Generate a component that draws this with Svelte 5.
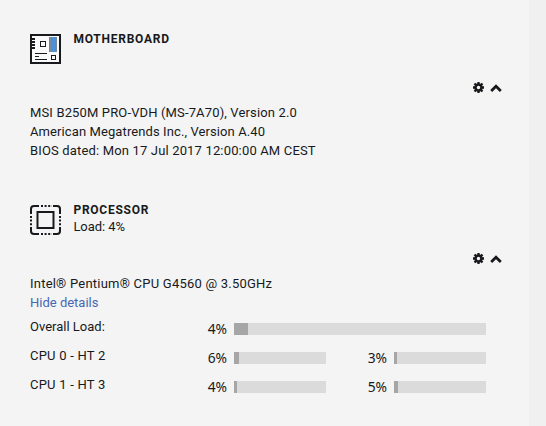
<script>
  const board = [
    ['MSI B250M PRO-VDH (MS-7A70), Version 2.0', 0.14],
    ['American Megatrends Inc., Version A.40', 0.1],
    ['BIOS dated: Mon 17 Jul 2017 12:00:00 AM CEST', 0.16]
  ];
  const threads = [
    { name: 'CPU 0 - HT 2', loads: [[6, 5], [3, 3]] },
    { name: 'CPU 1 - HT 3', loads: [[4, 3], [5, 4]] }
  ];
</script>

{#snippet tools()}
  <div class="tools">
    <svg width="11" height="11" viewBox="0 0 11 11">
      <path d="M5.5 0V11M0 5.5H11M1.5 1.5L9.5 9.5M9.5 1.5L1.5 9.5" stroke="#17191c" stroke-width="2.3" />
      <circle cx="5.5" cy="5.5" r="3" fill="#f4f4f4" stroke="#17191c" stroke-width="2.6" />
    </svg>
    <svg width="12" height="11" viewBox="0 0 12 11">
      <path d="M1.2 9L6 4.3L10.8 9" fill="none" stroke="#17191c" stroke-width="2.8" />
    </svg>
  </div>
{/snippet}

<main>
  <section class="motherboard">
    <header>
      <svg width="32" height="32" viewBox="0 0 32 32" shape-rendering="crispEdges">
        <rect x="1" y="2" width="29" height="28" fill="#f9f9f9" stroke="#17191c" stroke-width="2" />
        <path d="M5 20.5H17M5 26.5H17M5 23.5H9" stroke="#17191c" />
        <path d="M2 5.5H5M2 8.5H5M2 11.5H5M2 14.5H5" stroke="#17191c" stroke-width="2" />
        <rect x="10.5" y="8.5" width="5" height="5" fill="none" stroke="#17191c" />
        <rect x="21.5" y="22.5" width="4" height="4" fill="none" stroke="#17191c" />
        <rect x="19" y="4" width="8" height="15" fill="#4a90d9" />
        <path d="M20.5 4V19M23.5 4V19M26.5 4V19" stroke="#7a8a98" />
      </svg>
      <h2>MOTHERBOARD</h2>
    </header>
    {@render tools()}
    <div class="info">
      {#each board as [line, spacing]}
        <p style="letter-spacing: {spacing}px">{line}</p>
      {/each}
    </div>
  </section>

  <section class="processor">
    <header>
      <svg width="32" height="32" viewBox="0 0 32 32">
        <path d="M1 10V5Q1 2 4 2H9M23 2H27Q30 2 30 5V10M30 23V27Q30 30 27 30H23M9 30H4Q1 30 1 27V23" fill="none" stroke="#17191c" stroke-width="2" />
        <path d="M11 2H22M11 30H22M1 12V22M30 12V22" stroke="#17191c" stroke-width="2" stroke-dasharray="2 1.6" />
        <rect x="7.5" y="8" width="16" height="16" fill="none" stroke="#17191c" stroke-width="2" />
      </svg>
      <div><h2>PROCESSOR</h2><p class="load">Load: 4%</p></div>
    </header>
    {@render tools()}
    <div class="info">
      <p class="model">Intel® Pentium® CPU G4560 @ 3.50GHz</p>
      <p class="link">Hide details</p>
    </div>
    <div class="meters">
      <div class="row">
        <span class="name overall">Overall Load:</span><span class="pct">4%</span>
        <div class="bar wide"><i style="width: 14px"></i></div>
      </div>
      {#each threads as thread}
        <div class="row">
          <span class="name">{thread.name}</span>
          {#each thread.loads as [value, width]}
            <span class="pct">{value}%</span>
            <div class="bar"><i style="width: {width}px"></i></div>
          {/each}
        </div>
      {/each}
    </div>
  </section>
</main>

<style>
  :global(body) { background: #f0f0f0; }
  main {
    box-sizing: border-box; width: 529px; height: 426px; padding: 29px 27px 0 30px;
    background: #f4f4f4; color: #17191c; overflow: hidden;
    font: 13px/19px Roboto, "Noto Sans", sans-serif; letter-spacing: .22px;
  }
  section { height: 171px; }
  h2, p { margin: 0; white-space: nowrap; }
  header { display: flex; gap: 11.4px; height: 53px; }
  header svg { margin-top: 4px; }
  h2 { padding-top: 1px; font-size: 12px; line-height: 19px; font-weight: 700; letter-spacing: .75px; }
  .load { line-height: 17px; margin-top: -2px; letter-spacing: -.05px; }
  .tools { display: flex; gap: 6px; height: 11px; justify-content: flex-end; }
  .info { margin-top: 10px; }
  .link { color: #4669b3; letter-spacing: 0; }
  .meters { padding-top: 7px; }
  .row { display: flex; height: 29px; align-items: flex-start; }
  .name { width: 162px; line-height: 15px; }
  .overall { letter-spacing: 0; }
  .pct { width: 35px; text-align: right; font-size: 13.8px; line-height: 19px; letter-spacing: 0; font-family: "Noto Sans", sans-serif; }
  .bar { width: 92px; height: 12px; margin: 4px 0 0 7px; background: #dbdbdb; }
  .bar + .pct { width: 61px; }
  .bar.wide { width: 252px; }
  .bar i { display: block; height: 12px; background: #a6a6a6; }
</style>
